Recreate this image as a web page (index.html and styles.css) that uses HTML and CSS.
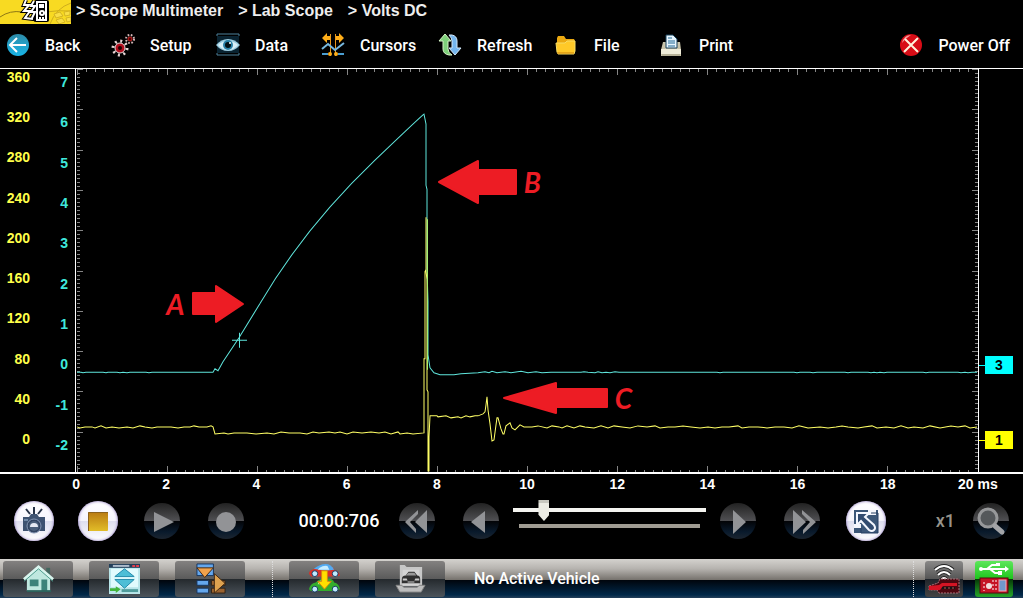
FILE: index.html
```
<!DOCTYPE html>
<html lang="en">
<head>
    <meta charset="UTF-8">
    <meta name="viewport" content="width=device-width, initial-scale=1.0">
    <title>Lab Scope - Volts DC</title>
    <link rel="stylesheet" href="styles.css">
</head>
<body>

    <!-- Breadcrumb -->
    <header class="breadcrumb">
        <svg class="logo" viewBox="0 0 71 24">
            <rect width="71" height="24" fill="#f8da22"/>
            <path d="M0 17Q10 10 22 12" fill="none" stroke="#8d7715"/>
            <path d="M50 24Q56 8 71 3M46 12Q58 10 71 11" fill="none" stroke="#cfae1c"/>
            <path d="M54 14l6-2 3 4-7 2zM64 12l6-1v4l-5 1zM56 20l6-2 3 4-6 2zM66 18l5-1v4l-4 1z" fill="#f9de45" stroke="#d5b422"/>
            <path d="M26 0l-2 5h5l-5 6h6l-5 7 8 1M34 1l-3 5h4l-4 6h4l-3 6 4 2" fill="none" stroke="#000" stroke-width="4"/>
            <rect x="34" y="0" width="15" height="22" rx="2" fill="#000"/>
            <rect x="37" y="2" width="9" height="18" fill="#000" stroke="#fff" stroke-width="2"/>
            <path d="M26 0l-2 5h5l-5 6h6l-5 7 8 1M34 1l-3 5h4l-4 6h4l-3 6" fill="none" stroke="#fff" stroke-width="2"/>
            <path d="M39 4h5v4h-5zM39 17h2v2h-2zM42 17h2v2h-2z" fill="#fff"/>
            <circle cx="42" cy="13" r="3" fill="#fff"/>
            <circle cx="42" cy="13" r="1" fill="#000"/>
        </svg>
        <nav class="crumbs">
            <a href="#">&gt; Scope Multimeter</a>
            <a href="#">&gt; Lab Scope</a>
            <a href="#">&gt; Volts DC</a>
        </nav>
    </header>

    <!-- Toolbar -->
    <div class="toolbar">
        <button class="tool">
            <svg viewBox="0 0 24 24">
                <defs><linearGradient id="blueBall" x2="0" y2="1"><stop offset="0" stop-color="#2d8ba8"/><stop offset="1" stop-color="#18b5e8"/></linearGradient></defs>
                <circle cx="12" cy="12" r="11" fill="url(#blueBall)"/>
                <path d="M20 12H5M11 5l-7 7 7 7" fill="none" stroke="#fff" stroke-width="2"/>
            </svg>
            Back
        </button>
        <button class="tool">
            <svg viewBox="0 0 24 24">
                <circle cx="9" cy="15" r="7" fill="none" stroke="#e8d5d5" stroke-width="3" stroke-dasharray="2 3.5"/>
                <circle cx="9" cy="15" r="5" fill="#b30d1d" stroke="#e9dada" stroke-width="1"/>
                <circle cx="9" cy="15" r="2" fill="#200"/>
                <circle cx="19" cy="6" r="4" fill="none" stroke="#d8baba" stroke-width="2" stroke-dasharray="1.6 1.6"/>
                <circle cx="19" cy="6" r="2" fill="#500" stroke="#c22"/>
            </svg>
            Setup
        </button>
        <button class="tool">
            <svg viewBox="0 0 24 24">
                <path d="M1 3V1h22v2M1 20v2h22v-2" fill="none" stroke="#4d819b"/>
                <rect x="1" y="3" width="22" height="17" fill="#092331"/>
                <path d="M0 12Q5 6 12 6t12 6q-5 6-12 6T0 12z" fill="#9bcce0"/>
                <path d="M2 12q4-4 10-4t10 4q-4 5-10 5T2 12z" fill="#d8eff7"/>
                <circle cx="12" cy="12" r="5" fill="#2980a6"/>
                <circle cx="12" cy="12" r="3" fill="#021015"/>
                <circle cx="14" cy="10" r="1" fill="#fff"/>
            </svg>
            Data
        </button>
        <button class="tool wide">
            <svg viewBox="0 0 24 24">
                <path d="M9.5 1v22M14.5 1v22" stroke="#e8971b" stroke-width="1"/>
                <path d="M1 5l5-5v3h3v4H6v3zM23 5l-5-5v3h-3v4h3v3z" fill="#ffae19"/>
                <path d="M1 16l6-5 7 6 9-7" fill="none" stroke="#77b8de" stroke-width="2"/>
                <path d="M1 21h6M17 21h6" stroke="#4b9ed1" stroke-width="2"/>
                <circle cx="9" cy="21" r="2" fill="#ffae19"/><circle cx="15" cy="21" r="2" fill="#ffae19"/>
            </svg>
            Cursors
        </button>
        <button class="tool wide">
            <svg viewBox="0 0 24 24">
                <path d="M11 2h3q5 1 5 6v7h4l-6 7-6-7h3V8q0-3-3-6z" fill="#75b6ee" stroke="#d4eafc"/>
                <path d="M7 1l6 7h-3v8q0 4 4 6h-3q-6-1-6-6V8H1z" fill="#7ed07a" stroke="#d7f5c8"/>
            </svg>
            Refresh
        </button>
        <button class="tool">
            <svg viewBox="0 0 24 24">
                <path d="M2 5l1-2h6l2 3h8l1 2v12H2z" fill="#eba911"/>
                <path d="M1 10h9l2-2h8v10l-1 3H3l-1-2z" fill="#ffc928" stroke="#f7dc64"/>
                <path d="M2 20h17" stroke="#ca8108"/>
            </svg>
            File
        </button>
        <button class="tool">
            <svg viewBox="0 0 24 24">
                <path d="M3 9h17l1 8v6H1v-6z" fill="#c9c4ab"/>
                <path d="M1 16h20v5H1z" fill="#efecd9"/>
                <path d="M6 2h7l4 4v9H6z" fill="#e7f6ff" stroke="#173f59"/>
                <path d="M8 5h4M8 8h7M8 10h7M8 13h7" stroke="#236995"/>
                <path d="M2 22h18" stroke="#a39e83"/>
            </svg>
            Print
        </button>
        <button class="tool power">
            <svg viewBox="0 0 24 24">
                <circle cx="12" cy="12" r="11" fill="#d80c16"/>
                <path d="M3 10Q5 2 12 2q-5 3-9 8z" fill="#f79a9c"/>
                <path d="M6 6l13 13M19 5L5 19" stroke="#fff2dc" stroke-width="2"/>
            </svg>
            Power Off
        </button>
    </div>

    <!-- Scope screen -->
    <main class="scope">
        <div class="scale volts">
            <span>360</span><span>320</span><span>280</span><span>240</span><span>200</span>
            <span>160</span><span>120</span><span>80</span><span>40</span><span>0</span>
        </div>
        <div class="scale amps">
            <span>7</span><span>6</span><span>5</span><span>4</span><span>3</span>
            <span>2</span><span>1</span><span>0</span><span>-1</span><span>-2</span>
        </div>
        <div class="plot">
            <svg class="traces" viewBox="-1 0 902 402" preserveAspectRatio="none">
                <!-- graticule ticks -->
                <g class="ticks">
                    <path d="M0 1.5H900" stroke-width="3" stroke-dasharray="1 8"/>
                    <path d="M0 3H900" stroke-width="6" stroke-dasharray="1 89"/>
                    <path d="M0 401H900" stroke-width="2" stroke-dasharray="1 8"/>
                    <path d="M0 399H900" stroke-width="6" stroke-dasharray="1 89"/>
                    <path d="M1.5 0V402" stroke-width="3" stroke-dasharray="1 3.02"/>
                    <path d="M3 0V402" stroke-width="6" stroke-dasharray="1 39.2"/>
                    <path d="M899.5 0V402" stroke-width="3" stroke-dasharray="1 3.02"/>
                    <path d="M898 0V402" stroke-width="6" stroke-dasharray="1 39.2"/>
                </g>
                <path class="trace cyan" d="M0 302.5H4L6 303 9 302.5H26L29 303 31 302.5H40L43 303 46 302.5 50 303 53 302.5H69L72 303 75 302.5H136L138 299 141 301 146 292 162 268 183 234C214 181 255 132 298 91S340 51 347 45L349 55V116L350 120V200L351 232V285L353 298 357 303 363 305H377L384 304 401 303 408 302 412 303 415 301.5 420 303 428 302 434 303 444 301.5 451 303 459 302 465 303 474 302.5H504L507 302 511 302.5 518 303 521 302 525 303 529 302.5 533 303 538 302 542 302.5H640L643 303 646 302.5H717L720 303 723 302.5H733L736 303 740 302.5H768L771 303 774 302.5H791L794 303 797 302.5 800 303 803 302.5 807 303 810 302.5H846L849 303 852 302.5H881L884 303 888 302.5 891 303 895 302.5H900"/>
                <path class="trace yellow" d="M0 357L3 358 8 357 15 357 18 358 24 356 29 358 35 357 42 358 50 357 56 358 63 356 68 357 75 358 80 357 87 357 94 357 101 358 107 357 113 357 117 356 122 357 130 357 134 356 136 357 138 364 147 363 151 364 157 363 163 363 170 363 179 364 190 363 197 364 204 362 212 363 223 363 230 364 236 362 242 363 252 362 258 363 263 362 270 364 276 362 285 363 294 362 302 363 308 362 314 364 321 362 323 364 330 363 336 364 347 363V289H348V202L349 200V148V202L350 210V320L351 322V401H352V367L353 346H360L361 347 369 346 374 348 381 347 384 348 389 346 393 347 398 346 401 346 406 344 408 342 409 335 410 327 411 340 413 354 415 371 417 370 419 355 420 348H421L424 359 426 364H427L429 356 433 353 435 358 438 360 443 355 447 357 455 357 461 356 470 358 475 356 482 357 485 358 490 356 497 358 503 356 508 357 517 358 524 356 531 358 537 356 545 357 553 358 561 356 570 357 578 356 583 358 591 357 598 357 606 356 614 357 623 358 631 357 638 358 645 357 652 357 661 356 665 358 672 357 681 357 690 358 698 357 707 357 715 358 722 356 731 358 743 357 751 358 759 357 765 356 771 357 781 358 787 357 795 356 800 358 809 357 817 358 824 356 831 358 837 357 846 358 853 356 863 358 874 356 881 357 888 356 893 358 900 357"/>
                <path class="trace spike" d="M350.5 150V300"/>
                <path class="trace cyan" d="M155 270.5H170M162.5 263V278"/>
            </svg>

            <div class="callout a">
                A
                <svg width="54" height="40" viewBox="0 0 54 40"><path d="M2 9H25V2L52 20 25 38V30H2z"/></svg>
            </div>
            <div class="callout b">
                <svg width="80" height="46" viewBox="0 0 80 46"><path d="M2 23L41 2V11H79V35H41V44z"/></svg>
                B
            </div>
            <div class="callout c">
                <svg width="106" height="34" viewBox="0 0 106 34"><path d="M2 17L54 2V8H105V26H54V32z"/></svg>
                C
            </div>
        </div>
        <div class="channels">
            <span class="channel three">3</span>
            <span class="channel one">1</span>
        </div>
    </main>
    <div class="time-axis">
        <span>0</span><span>2</span><span>4</span><span>6</span><span>8</span><span>10</span>
        <span>12</span><span>14</span><span>16</span><span>18</span><span>20 ms</span>
    </div>

    <!-- Playback controls -->
    <div class="controls">
        <button class="round light" aria-label="Snapshot">
            <svg viewBox="0 0 40 40">
                <path d="M20 6v7M12 8l4 5M28 8l-4 5" stroke="#263247" stroke-width="2"/>
                <path d="M9 16h6l2-3h6l2 3h6v14H9z" fill="#3e5271"/>
                <circle cx="20" cy="25" r="7" fill="#324462" stroke="#8495b3" stroke-width="1"/>
                <circle cx="20" cy="25" r="5" fill="#4b5f7b"/>
                <path d="M16 26q0-4 4-4t4 4z" fill="#e6e9f3"/>
                <path d="M10 18h4v2h-4z" fill="#7189a7"/>
            </svg>
        </button>
        <button class="round light" aria-label="Stop">
            <svg viewBox="0 0 40 40">
                <defs><linearGradient id="stopFill" x2="0" y2="1"><stop offset="0" stop-color="#b97a12"/><stop offset="1" stop-color="#e2bd28"/></linearGradient></defs>
                <rect x="10" y="11" width="20" height="19" rx="1" fill="url(#stopFill)"/>
                <path d="M10.5 30V11.5H30" fill="none" stroke="#8b611c"/>
            </svg>
        </button>
        <button class="round" aria-label="Play">
            <svg viewBox="0 0 40 40"><path class="glyph" d="M12 11L32 21 12 31z"/></svg>
        </button>
        <button class="round" aria-label="Record">
            <svg viewBox="0 0 40 40"><circle class="glyph" cx="20" cy="21" r="10"/></svg>
        </button>
        <output class="timer">00:00:706</output>
        <button class="round" aria-label="Rewind">
            <svg viewBox="0 0 40 40"><path class="glyph" d="M30 9V32L18 21zM21 9L8 21 19 32V28L13 21 21 13z"/></svg>
        </button>
        <button class="round" aria-label="Step back">
            <svg viewBox="0 0 40 40"><path class="glyph" d="M24 10V32L10 21z"/></svg>
        </button>
        <div class="seek">
            <input type="range" class="slider" min="0" max="100" value="14" aria-label="Position">
            <div class="buffer"></div>
        </div>
        <button class="round" aria-label="Step forward">
            <svg viewBox="0 0 40 40"><path class="glyph" d="M15 9L28 21 15 33z"/></svg>
        </button>
        <button class="round" aria-label="Fast forward">
            <svg viewBox="0 0 40 40"><path class="glyph" d="M11 9L24 21 11 33zM20 9L34 21 21 33V29L28 21 20 13z"/></svg>
        </button>
        <button class="round light" aria-label="Expand">
            <svg viewBox="0 0 40 40">
                <path d="M8 9H32V32H8z" fill="#3c5678"/>
                <path d="M22 9h8v5h-8zM8 23h7v4H8z" fill="#f4f5fc"/>
                <path d="M25 12h7v20H15v-5" fill="none" stroke="#263f62"/>
                <path d="M11 12h12l-4 4 9 8q2 3 0 5t-5 0l-8-9-4 4z" fill="#324b70" stroke="#f5f7ff" stroke-width="2"/>
            </svg>
        </button>
        <span class="zoom-level">x1</span>
        <button class="round" aria-label="Zoom">
            <svg viewBox="0 0 40 40">
                <circle cx="17" cy="17" r="9" fill="#55585b" stroke="#97989a" stroke-width="3"/>
                <path d="M24 25l7 6" stroke="#a3a4a7" stroke-width="5" stroke-linecap="round"/>
            </svg>
        </button>
    </div>

    <!-- Bottom bar -->
    <footer class="taskbar">
        <button class="task" aria-label="Home">
            <svg viewBox="0 0 32 32">
                <path d="M24 5h4v9h-4z" fill="#42675f"/>
                <path d="M4 16L16 5l12 11v13H4z" fill="#bfe8df"/>
                <path d="M1 17L16 4l15 13" fill="none" stroke="#d9f5ee" stroke-width="3"/>
                <path d="M1 19L16 6l15 13" fill="none" stroke="#4b9c8c"/>
                <path d="M7 17h9v7H7zM19 17h6v12h-6z" fill="#3c837a"/>
                <path d="M4 29h25" stroke="#2c635c" stroke-width="2"/>
            </svg>
        </button>
        <button class="task" aria-label="Full screen">
            <svg viewBox="0 0 32 32">
                <rect width="32" height="31" y="1" fill="#b9e6ea"/>
                <path d="M0 1h32v4H0z" fill="#213e59"/><path d="M4 2h17v2H4z" fill="#aebccb"/><path d="M24 2h3v2h-3zM28 2h3v2h-3z" fill="#e13e4c"/>
                <path d="M2 6h28v19H2z" fill="#e1fbfd"/>
                <path d="M16 6l10 8H6zM6 17h20L16 26z" fill="#4dbed6" stroke="#238aaa"/>
                <path d="M1 26h6v-2l5 3-5 4v-2H1z" fill="#43b53c"/><path d="M13 27h17v3H13z" fill="#4f9c9c"/>
            </svg>
        </button>
        <button class="task" aria-label="Move down">
            <svg viewBox="0 0 32 32">
                <path d="M2 1h17v12H2zM2 18h12v5H2zM2 26h12v5H2z" fill="#64a7ed" stroke="#17355e"/>
                <path d="M17 18h14v5H17zM17 26h14v5H17z" fill="#9b6330" stroke="#332315"/>
                <path d="M2 5h17L10 15z" fill="#f2a24b" stroke="#442913"/><path d="M20 11v20l11-10z" fill="#dea24f" stroke="#442913"/>
            </svg>
        </button>
        <span class="divider"></span>
        <button class="task" aria-label="Change vehicle">
            <svg viewBox="0 0 32 32">
                <path d="M0 11Q0 7 7 6q4-5 12-4 6 1 7 5 5 1 6 6l-4 1H2z" fill="#d93128"/>
                <path d="M5 6q6-5 12-5 6 0 9 6L17 8z" fill="#52aaf1"/>
                <path d="M11 5q4-3 8-2l2 4H9z" fill="#c7edff"/>
                <path d="M0 27q1-6 7-7 5-5 12-4 6 0 7 4 5 1 6 7l-4 2H2z" fill="#33ad2d"/>
                <path d="M10 19q5-3 11 0v3H9z" fill="#b8ef91"/>
                <path d="M13 8h6v11h4l-7 8-7-8h4z" fill="#ffdf00" stroke="#d58310"/>
                <g fill="#bfe9ff" stroke="#183d61" stroke-width="1"><circle cx="6" cy="11" r="3"/><circle cx="27" cy="11" r="3"/><circle cx="6" cy="27" r="3"/><circle cx="27" cy="27" r="3"/></g>
            </svg>
        </button>
        <button class="task" aria-label="Vehicle records">
            <svg viewBox="0 0 32 32">
                <path d="M5 2h5l2 2h16v20H5z" fill="#c7c7c7"/><path d="M8 7h17v16H8z" fill="#d4d4d4"/>
                <path d="M7 17q0-4 4-4l3-4h6l3 4q3 0 3 4v4H7z" fill="#303030"/><path d="M14 10h6l2 3H11z" fill="#999"/>
                <path d="M8 16h4l1 2H8zM25 16h-4l-1 2h5zM13 19h7v1h-7z" fill="#ccc"/>
                <path d="M1 23h6l2 2h14l2-2h6l-4 7H5z" fill="#bdbdbd" stroke="#828282"/>
            </svg>
        </button>
        <span class="vehicle">No Active Vehicle</span>
        <span class="divider end"></span>
        <button class="status" aria-label="Wireless">
            <svg viewBox="0 0 38 34">
                <path d="M10 8q9-8 18 0M13 13q6-6 12 0M16 18q3-4 6 0" fill="none" stroke="#222" stroke-width="4"/>
                <path d="M10 8q9-8 18 0M13 13q6-6 12 0M16 18q3-4 6 0" fill="none" stroke="#fff" stroke-width="2"/>
                <path d="M4 24l9-3 2-4h19v14H14l-2-3H4z" fill="#4c0710" stroke="#ae7078" stroke-dasharray="2 1"/>
                <path d="M4 24l10-1 3-2h15v3H18l-3 4H4z" fill="#d51424"/>
                <path d="M17 25h13v2H17z" fill="#151515"/><path d="M19 26h2M23 26h2M27 26h2" stroke="#b55"/>
            </svg>
        </button>
        <button class="status green" aria-label="USB">
            <svg viewBox="0 0 38 34">
                <path d="M6 7h25M12 7l5-4h5M15 7l5 4h5" fill="none" stroke="#fff" stroke-width="2"/>
                <circle cx="6" cy="7" r="2" fill="#fff"/><path d="M30 4l4 3-4 3zM21 1h4v3h-4zM23 9h4v4h-4z" fill="#fff"/>
                <rect x="5" y="16" width="28" height="15" fill="#c51325" stroke="#5b0710"/>
                <path d="M9 20v9M18 18v12M21 18v12" stroke="#fff" stroke-width="1" stroke-dasharray="2 2"/>
                <circle cx="14" cy="24" r="3" fill="#f1dddd"/><rect x="24" y="18" width="7" height="11" fill="#7197cd" stroke="#f1a8b2"/>
            </svg>
        </button>
    </footer>

</body>
</html>
```
FILE: styles.css
```
* {
    box-sizing: border-box;
}

body {
    display: flex;
    flex-direction: column;
    min-height: 100vh;
    margin: 0;
    background: #000;
    color: #fff;
    font-family: "Liberation Sans", Arial, sans-serif;
    font-size: 14px;
    font-weight: bold;
}

button {
    padding: 0;
    border: none;
    background: none;
    color: inherit;
    cursor: pointer;
}

svg {
    display: block;
}

/* Breadcrumb */
.breadcrumb {
    display: flex;
    height: 24px;
}

.logo {
    width: 71px;
    height: 24px;
}

.crumbs {
    display: flex;
    gap: 15px;
    padding-left: 5px;
    font-size: 16px;
    line-height: 22px;
}

.crumbs a {
    color: #eee;
    text-decoration: none;
}

/* Toolbar */
.toolbar {
    display: flex;
    height: 44px;
    padding: 0 13px 2px 6px;
}

.tool {
    display: flex;
    align-items: center;
    gap: 15px;
    width: 105px;
    font-family: Roboto, sans-serif;
    font-size: 16px;
    font-weight: 500;
    white-space: nowrap;
}

.tool svg {
    flex: none;
    width: 24px;
    height: 24px;
}

.tool.wide {
    width: 117px;
}

.tool.power {
    width: auto;
    margin-left: auto;
}

/* Scope screen */
.scope {
    display: flex;
    flex: 1;
    border-top: 1px solid #fff;
    border-bottom: 2px solid #fff;
}

.scale {
    display: flex;
    flex-direction: column;
    justify-content: space-between;
    text-align: right;
    line-height: 16px;
}

.volts {
    width: 30px;
    padding-bottom: 25px;
    color: #ffff4a;
}

.amps {
    width: 45px;
    padding: 5px 7px 19px 0;
    color: #3fe8dc;
}

.plot {
    position: relative;
    display: flex;
    flex: 1;
    border-left: 1px solid #fff;
    border-right: 1px solid #fff;
}

.traces {
    flex: 1;
    width: 100%;
}

.ticks {
    fill: none;
    stroke: #858585;
    shape-rendering: crispEdges;
}

.trace {
    fill: none;
    stroke-width: 1;
}

.cyan {
    stroke: #5fe5dc;
}

.yellow {
    stroke: #ffff66;
}

.spike {
    stroke: #a8f070;
}

.callout {
    position: absolute;
    display: flex;
    align-items: center;
    gap: 7px;
    color: #ed1c24;
    font-family: Lato, sans-serif;
    font-size: 28px;
    font-style: italic;
    line-height: 34px;
}

.callout path {
    fill: #ed1c24;
    stroke: #ed1c24;
    stroke-width: 2;
    stroke-linejoin: round;
}

.callout.a {
    left: 10%;
    top: 53.3%;
}

.callout.b {
    left: 40%;
    top: 22.3%;
}

.callout.c {
    left: 47.2%;
    top: 77.5%;
}

.channels {
    display: flex;
    flex-direction: column;
    justify-content: flex-end;
    gap: 57px;
    width: 44px;
    padding-bottom: 23px;
}

.channel {
    display: flex;
    align-items: center;
    width: 34px;
    height: 18px;
    color: #000;
}

.channel::before {
    content: "";
    width: 6px;
    height: 1px;
    margin-right: 10px;
}

.three {
    background: linear-gradient(90deg, #000 6px, #0ff 6px);
}

.one {
    background: linear-gradient(90deg, #000 6px, #ff0 6px);
}

.three::before {
    background: #0ff;
}

.one::before {
    background: #ff0;
}

.time-axis {
    display: grid;
    grid-template-columns: repeat(11, 1fr);
    height: 22px;
    padding-left: 31px;
    line-height: 20px;
    text-align: center;
}

/* Playback controls */
.controls {
    display: flex;
    align-items: center;
    height: 63px;
    padding: 0 0 14px 2px;
}

.round {
    flex: none;
    width: 36px;
    height: 36px;
    margin: 0 14px;
    border-radius: 50%;
    background: linear-gradient(#222 0, #505053 50%, #030407 51%, #091a2c 80%, #1c2530 100%);
}

.round svg {
    width: 40px;
    height: 40px;
    margin: -2px;
}

.round.light {
    width: 40px;
    height: 40px;
    margin: 0 12px;
    background: linear-gradient(#fff 0, #f5f4fc 50%, #dfdff0 51%, #fff 100%);
    box-shadow: inset 0 0 3px #8069b8;
}

.round.light svg {
    margin: 0;
}

.glyph {
    fill: #929396;
}

.timer {
    width: 127px;
    padding-left: 35px;
    font-family: Roboto, sans-serif;
    font-size: 18px;
    font-weight: 500;
    text-align: center;
}

.seek {
    flex: 0 1 193px;
    align-self: flex-start;
    padding-top: 3px;
}

.slider {
    display: block;
    width: 100%;
    height: 22px;
    margin: 0;
    appearance: none;
    background: none;
}

.slider::-webkit-slider-runnable-track {
    height: 4px;
    background: #f4f4f0;
}

.slider::-webkit-slider-thumb {
    appearance: none;
    width: 11px;
    height: 21px;
    margin-top: -8px;
    background: linear-gradient(#c8c8c0 3px, #ecece4 3px);
    clip-path: polygon(0 0, 100% 0, 100% 70%, 50% 100%, 0 70%);
}

.buffer {
    height: 4px;
    margin: 3px 6px 0;
    background: #a09c93;
}

.zoom-level {
    margin-left: auto;
    margin-right: 4px;
    color: #96938a;
    font-family: Roboto, sans-serif;
    font-size: 18px;
    font-weight: 500;
}

/* Bottom bar */
.taskbar {
    display: flex;
    align-items: center;
    height: 39px;
    padding: 0 10px 0 3px;
    background: linear-gradient(#d4d2ce 0, #b6b3af 25%, #77736e 53%, #00050c 54%, #002849 92%, #24405a 100%);
}

.task {
    display: flex;
    justify-content: center;
    align-items: center;
    flex: none;
    width: 70px;
    height: 36px;
    margin-right: 16px;
    border-radius: 3px;
    background: linear-gradient(#838180 0, #5b5b5b 49%, #252a2e 51%, #4c545b 100%);
}

.task svg {
    width: 31px;
    height: 31px;
}

.divider {
    height: 36px;
    margin: 0 16px 0 11px;
    border-left: 1px dotted #ddd;
}

.divider.end {
    margin: 0 11px 0 auto;
}

.vehicle {
    padding-left: 13px;
    font-family: Roboto, sans-serif;
    font-size: 16px;
    font-weight: 500;
}

.status {
    width: 38px;
    height: 36px;
    border-radius: 3px;
    background: linear-gradient(#898887 0, #555 50%, #20252b 51%, #444 100%);
}

.status svg {
    width: 38px;
    height: 34px;
}

.status.green {
    margin-left: 12px;
    background: linear-gradient(#5ee65c 0, #1ec51d 50%, #063b08 51%, #25a629 100%);
}
```
